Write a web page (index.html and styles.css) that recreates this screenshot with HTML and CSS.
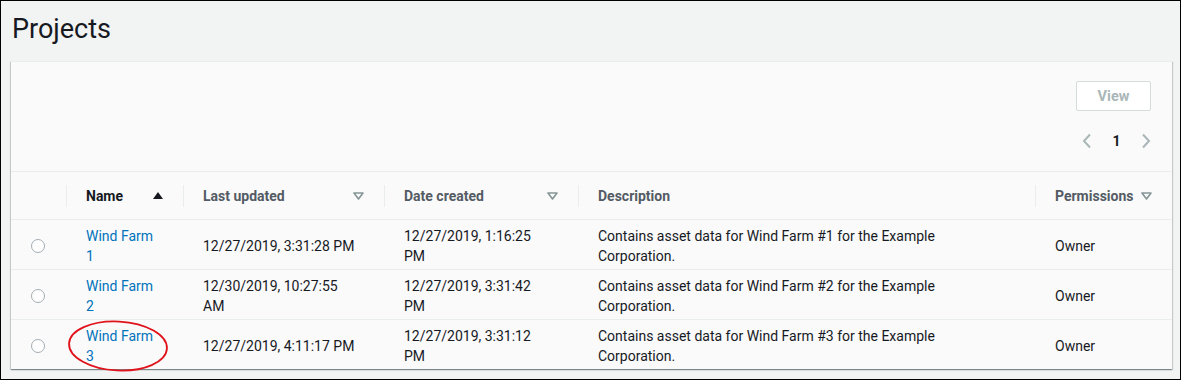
FILE: index.html
```html
<!DOCTYPE html>
<html lang="en">
<head>
<meta charset="utf-8">
<title>Projects</title>
<link rel="stylesheet" href="styles.css">
</head>
<body>
<div class="frame">
  <h1 class="title">Projects</h1>
  <div class="card">
    <div class="card-top">
      <button class="btn-view" disabled>View</button>
      <div class="pager">
        <svg class="chev" width="12" height="16" viewBox="0 0 12 16"><polyline points="9,1.5 3,8 9,14.5" fill="none" stroke="#aab7b8" stroke-width="2"/></svg>
        <span class="page-num">1</span>
        <svg class="chev" width="12" height="16" viewBox="0 0 12 16"><polyline points="3,1.5 9,8 3,14.5" fill="none" stroke="#aab7b8" stroke-width="2"/></svg>
      </div>
    </div>
    <table class="tbl">
      <colgroup>
        <col class="c-sel"><col class="c-name"><col class="c-upd"><col class="c-cre"><col class="c-desc"><col class="c-perm">
      </colgroup>
      <thead>
        <tr>
          <th class="th-sel"></th>
          <th class="th-div"><div class="th-in sorted"><span>Name</span><svg class="sort" width="10" height="7" viewBox="0 0 10 7"><polygon points="0,7 10,7 5,0" fill="#16191f"/></svg></div></th>
          <th class="th-div"><div class="th-in"><span>Last updated</span><svg class="sort" width="11" height="8" viewBox="0 0 11 8"><polygon points="1,1 10,1 5.5,7" fill="none" stroke="#879596" stroke-width="1.6" stroke-linejoin="round"/></svg></div></th>
          <th class="th-div"><div class="th-in"><span>Date created</span><svg class="sort" width="11" height="8" viewBox="0 0 11 8"><polygon points="1,1 10,1 5.5,7" fill="none" stroke="#879596" stroke-width="1.6" stroke-linejoin="round"/></svg></div></th>
          <th class="th-div"><div class="th-in"><span>Description</span></div></th>
          <th class="th-div"><div class="th-in th-perm"><span>Permissions</span><svg class="sort" width="11" height="8" viewBox="0 0 11 8"><polygon points="1,1 10,1 5.5,7" fill="none" stroke="#879596" stroke-width="1.6" stroke-linejoin="round"/></svg></div></th>
        </tr>
      </thead>
      <tbody>
        <tr>
          <td><span class="radio"></span></td>
          <td><a class="link w-name" href="#">Wind Farm 1</a></td>
          <td><div class="w-upd">12/27/2019, 3:31:28 PM</div></td>
          <td><div class="w-cre">12/27/2019, 1:16:25 PM</div></td>
          <td><div class="w-desc">Contains asset data for Wind Farm #1 for the Example Corporation.</div></td>
          <td>Owner</td>
        </tr>
        <tr>
          <td><span class="radio"></span></td>
          <td><a class="link w-name" href="#">Wind Farm 2</a></td>
          <td><div class="w-upd">12/30/2019, 10:27:55 AM</div></td>
          <td><div class="w-cre">12/27/2019, 3:31:42 PM</div></td>
          <td><div class="w-desc">Contains asset data for Wind Farm #2 for the Example Corporation.</div></td>
          <td>Owner</td>
        </tr>
        <tr class="last">
          <td><span class="radio"></span></td>
          <td><a class="link w-name" href="#">Wind Farm 3</a></td>
          <td><div class="w-upd">12/27/2019, 4:11:17 PM</div></td>
          <td><div class="w-cre">12/27/2019, 3:31:12 PM</div></td>
          <td><div class="w-desc">Contains asset data for Wind Farm #3 for the Example Corporation.</div></td>
          <td>Owner</td>
        </tr>
      </tbody>
    </table>
  </div>
  <svg class="annot" width="104" height="54" viewBox="0 0 104 54"><ellipse cx="52" cy="27" rx="49" ry="24.5" fill="none" stroke="#e0121b" stroke-width="1.8" transform="rotate(3 52 27)"/></svg>
</div>
</body>
</html>
```
FILE: styles.css
```css
* { box-sizing: border-box; }
html, body { margin: 0; padding: 0; }
body { font-family: Roboto, "Liberation Sans", Arial, sans-serif; font-size: 14px; line-height: 20px; color: #16191f; background: #fff; }

.frame {
  position: relative;
  width: 1181px;
  height: 380px;
  border: 1px solid #000;
  background: #f2f3f3;
  overflow: hidden;
}

.title {
  margin: 0;
  height: 60px;
  padding: 11px 0 0 11px;
  font-size: 27px;
  line-height: 34px;
  font-weight: 400;
  color: #16191f;
}

.card {
  margin-left: 10px;
  width: 1161px;
  background: #fafafa;
  border-top: 1px solid #eaeded;
  box-shadow: 0 1px 1px 0 rgba(0, 28, 36, 0.3), 1px 1px 1px 0 rgba(0, 28, 36, 0.15), -1px 1px 1px 0 rgba(0, 28, 36, 0.15);
}

.card-top {
  height: 109px;
  padding: 19px 21px 0 0;
  display: flex;
  flex-direction: column;
  align-items: flex-end;
}

.btn-view {
  width: 75px;
  height: 30px;
  border: 1px solid #d5dbdb;
  border-radius: 2px;
  background: #fff;
  color: #aab7b8;
  font-family: inherit;
  font-size: 14.5px;
  font-weight: 700;
  padding: 0;
}

.pager {
  margin-top: 18px;
  margin-right: -1px;
  display: flex;
  align-items: center;
  height: 24px;
}
.chev { display: block; }
.page-num { width: 47px; text-align: center; font-weight: 700; font-size: 14px; color: #16191f; }

.tbl {
  width: 1161px;
  border-collapse: collapse;
  table-layout: fixed;
}
.c-sel { width: 55px; }
.c-name { width: 117px; }
.c-upd { width: 201px; }
.c-cre { width: 194px; }
.c-desc { width: 457px; }
.c-perm { width: 137px; }

thead tr { border-top: 1px solid #eaeded; border-bottom: 1px solid #eaeded; }
th {
  height: 48px;
  padding: 0 20px;
  text-align: left;
  font-weight: 700;
  color: #545b64;
  position: relative;
}
.th-div::before {
  content: "";
  position: absolute;
  left: 0;
  top: 13px;
  bottom: 12px;
  width: 1px;
  background: #eaeded;
}
.th-in { display: flex; align-items: center; justify-content: space-between; gap: 8px; white-space: nowrap; }
.th-in.sorted { color: #16191f; }
.th-perm { justify-content: flex-start; }
.sort { display: block; flex: none; }

td {
  padding: 6px 20px 3px;
  vertical-align: middle;
  color: #16191f;
}
tbody tr { border-bottom: 1px solid #eaeded; }
tbody tr.last { border-bottom: 0; }

.radio {
  display: block;
  width: 14px;
  height: 14px;
  border: 1.5px solid #a3adb2;
  border-radius: 50%;
  background: #fff;
}

.link { color: #0073bb; text-decoration: none; display: block; }
.w-name { max-width: 74px; }
.w-upd { max-width: 155px; }
.w-cre { max-width: 150px; }
.w-desc { max-width: 350px; }

.annot {
  position: absolute;
  left: 65px;
  top: 318px;
}
```
